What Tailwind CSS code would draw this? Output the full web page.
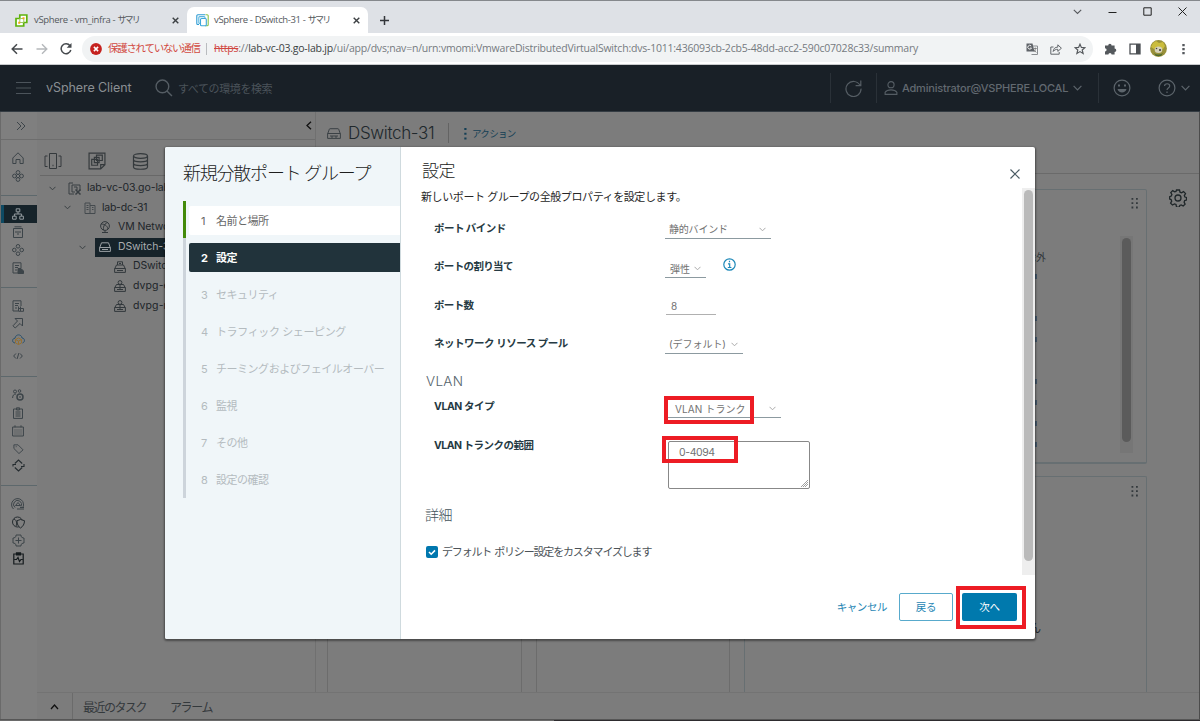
<!DOCTYPE html>
<html lang="ja">
<head>
<meta charset="utf-8">
<title>vSphere - DSwitch-31 - サマリ</title>
<script src="https://cdn.jsdelivr.net/npm/@tailwindcss/browser@4"></script>
</head>
<body class="overflow-hidden">
<div class="relative flex h-[721px] w-[1200px] flex-col overflow-hidden bg-[#7c7c7c] font-['Inter','Noto_Sans_CJK_JP',sans-serif] text-[11px] leading-none whitespace-nowrap text-[#333]">

  <!-- browser tabs -->
  <div class="flex h-[33px] shrink-0 items-end border-t border-[#85888c] bg-[#dee1e6] font-['Open_Sans','Noto_Sans_CJK_JP',sans-serif] text-[9.500px] text-[#55595d]">
    <div class="flex h-[26px] w-[187px] items-center pl-[15px]">
      <svg class="mr-[6px] size-[13px]" viewBox="0 0 13 13" fill="none" stroke="#5fb30b" stroke-width="1.7"><path d="M4.8 1h7v7.500H8.700V12H1V4.500h3.800z" fill="#fff"/><path d="M4.800 4.500v4h4v-4z" stroke="#9ccc62" stroke-width="1"/><path d="M7.500 3.200h2v2h-2zM3.200 7.800h2v2h-2z" fill="#f7a01d" stroke="none"/></svg>
      <span class="w-[138px] tracking-[-0.330px]">vSphere - vm_infra - <span class="text-[9px] tracking-[-1.900px]">サマリ</span></span>
      <svg class="size-[7px]" viewBox="0 0 7 7" stroke="#3c4043" stroke-width="1.400"><path d="M.7.7l5.600 5.600M6.300.7L.7 6.300"/></svg>
    </div>
    <div class="flex h-[26px] w-[181px] items-center rounded-t-[7px] bg-white pl-[9px]">
      <svg class="mr-[5px] size-[13px]" viewBox="0 0 13 13" fill="none" stroke-width="1.100"><path d="M3 10.500H1.800a1 1 0 01-1-1v-7.700a1 1 0 011-1h7.400" stroke="#2d9bd3"/><path d="M9.500.8h1.700a1 1 0 011 1v9a1 1 0 01-1 1H9" stroke="#8bc34a"/><rect x="2.800" y="2.600" width="6.200" height="6.800" rx="1" stroke="#59b6df"/><rect x="4.500" y="4.500" width="5.800" height="7.200" rx="1" stroke="#3da7db" fill="#fff"/></svg>
      <span class="w-[139px] tracking-[-0.350px]">vSphere - DSwitch-31 - <span class="text-[9px] tracking-[-1.700px]">サマリ</span></span>
      <svg class="size-[7px]" viewBox="0 0 7 7" stroke="#3c4043" stroke-width="1.400"><path d="M.7.7l5.600 5.600M6.300.7L.7 6.300"/></svg>
    </div>
    <div class="flex h-[26px] grow items-center pl-[12px]">
      <svg class="size-[9px]" viewBox="0 0 9 9" stroke="#33363a" stroke-width="1.500"><path d="M0 4.500h9M4.500 0v9"/></svg>
    </div>
    <div class="flex h-[32px] items-start gap-[26px] pt-[6px] pr-[13px]">
      <svg class="size-[9px]" viewBox="0 0 9 9" fill="none" stroke="#55585c" stroke-width="1.100"><path d="M.8 2.800l3.700 3.700 3.700-3.700"/></svg>
      <svg class="size-[9px]" viewBox="0 0 9 9" stroke="#222" stroke-width="1"><path d="M.5 5.500h8"/></svg>
      <svg class="size-[9px]" viewBox="0 0 9 9" fill="none" stroke="#222" stroke-width="1"><path d="M.8.8h7.400v7.400H.8z"/></svg>
      <svg class="size-[9px]" viewBox="0 0 9 9" stroke="#222" stroke-width="1"><path d="M.5.5l8 8M8.500.5l-8 8"/></svg>
    </div>
  </div>

  <!-- address bar -->
  <div class="flex h-[32px] shrink-0 items-center border-b border-[#c9cbcd] bg-white pl-[11px] font-['Open_Sans','Noto_Sans_CJK_JP',sans-serif]">
    <svg class="mr-[13px] size-[12px] shrink-0" viewBox="0 0 12 12" fill="none" stroke="#45494d" stroke-width="1.500"><path d="M11.500 6H1.500M6 1.200L1.200 6 6 10.800"/></svg>
    <svg class="mr-[12px] size-[12px] shrink-0" viewBox="0 0 12 12" fill="none" stroke="#b5b8bb" stroke-width="1.400"><path d="M.5 6h10M6 1.200L10.800 6 6 10.800"/></svg>
    <svg class="mr-[10px] size-[12px] shrink-0" viewBox="0 0 12 12" fill="none" stroke="#45494d" stroke-width="1.500"><path d="M10 2.800A4.900 4.900 0 1010.800 7"/><path d="M11.500 0v4.800H6.700z" fill="#45494d" stroke="none"/></svg>
    <div class="flex h-[26px] w-[1011px] shrink-0 items-center rounded-full bg-[#f1f3f4] pl-[8px]">
      <svg class="mr-[6px] size-[12px] shrink-0" viewBox="0 0 12 12"><circle cx="6" cy="6" r="5.900" fill="#c5221f"/><path d="M3.900 3.900l4.200 4.200M8.100 3.900L3.900 8.100" stroke="#fff" stroke-width="1.500"/></svg>
      <span class="w-[92px] shrink-0 text-[10.500px] tracking-[-1.300px] text-[#d14a41]">保護されていない通信</span>
      <span class="mr-[7px] ml-[6px] h-[12px] w-px shrink-0 bg-[#b9bcbf]"></span>
      <span class="w-[812px] shrink-0 text-[10.500px] tracking-[-0.210px] text-[#757a7f]"><span class="text-[#d0473f] line-through">https</span>://<span class="text-[#3b3f43]">lab-vc-03.go-lab.jp</span>/ui/app/dvs;nav=n/urn:vmomi:VmwareDistributedVirtualSwitch:dvs-1011:436093cb-2cb5-48dd-acc2-590c07028c33/summary</span>
      <svg class="mr-[12px] size-[12px] shrink-0" viewBox="0 0 12 12" fill="none"><path d="M.5.500h6l2 8h-8z" fill="#5f6368"/><path d="M7 3h4.500v8.500H5.500" stroke="#8a8d91"/><path d="M5.200 3A1.900 1.900 0 105.500 5H4.200" stroke="#fff" stroke-width=".9"/><path d="M7.800 5.500h3M9.300 4.500v1.500q0 2-1.500 3M8.300 7l2 2.500" stroke="#777" stroke-width=".8"/></svg>
      <svg class="mr-[12px] size-[12px] shrink-0" viewBox="0 0 12 12" fill="none" stroke="#63676b" stroke-width="1"><path d="M3.500 4H.8v7.200h8.400V9"/><path d="M3.200 8.500C3.500 5.500 5 4.200 7.800 4.100V1.800L11.400 5.200 7.800 8.400V6.300C5.700 6.300 4.300 7 3.200 8.500z"/></svg>
      <svg class="size-[12px] shrink-0" viewBox="0 0 12 12" fill="none" stroke="#55595d" stroke-width="1.200"><path d="M6 1.200l1.400 3.200 3.500.3-2.700 2.300.9 3.400L6 8.600l-3.100 1.800.9-3.400L1.100 4.700l3.500-.3z"/></svg>
    </div>
    <div class="ml-[11px] flex shrink-0 items-center">
      <svg class="mr-[12px] size-[13px]" viewBox="0 0 13 13" fill="#55595d"><path d="M1 3.500h3.200a1.700 1.700 0 113.400 0h3v3a1.700 1.700 0 110 3.400v2.600H7.600a1.600 1.600 0 10-3.200 0H1V9.400a1.600 1.600 0 100-3.200z"/></svg>
      <svg class="mr-[9px] size-[12px]" viewBox="0 0 12 12"><path d="M1 1.200h10v9.600H1z" fill="none" stroke="#4b4f53" stroke-width="1.300"/><path d="M7 1h4v10H7z" fill="#4b4f53"/></svg>
      <svg class="mr-[15px] size-[17px]" viewBox="0 0 17 17"><circle cx="8.500" cy="8.500" r="8.400" fill="#99913a"/><path d="M3 3l3-2 3 2 4-1 2 4-2 3H4L1 7z" fill="#cbbd3c"/><ellipse cx="8.500" cy="9.800" rx="3.800" ry="3.200" fill="#d6d2b8"/><circle cx="6.500" cy="8.500" r=".8" fill="#444"/><circle cx="10" cy="10" r="1" fill="#333"/><path d="M4 13q4 3 9 0l-2 3H6z" fill="#4d6a31"/></svg>
      <svg class="h-[12px] w-[3px]" viewBox="0 0 3 12" fill="#55595d"><path d="M.3 1h2.400v2.200H.3zM.3 5h2.400v2.200H.3zM.3 9h2.400v2.200H.3z"/></svg>
    </div>
  </div>

  <!-- product header -->
  <div class="flex h-[47px] shrink-0 items-center border-b border-[#343c43] bg-[#192027] pl-[16px] text-[#626970]">
    <svg class="mr-[15px] h-[12px] w-[15px]" viewBox="0 0 15 12" stroke="#4c545b" stroke-width="1"><path d="M0 .5h15M0 6h15M0 11.500h15"/></svg>
    <span class="w-[109px] pt-px text-[12.500px] tracking-[-0.080px] text-[#8a8f93]">vSphere Client</span>
    <svg class="mr-[5px] size-[18px]" viewBox="0 0 17 17" fill="none" stroke="#555d64" stroke-width="1.300"><circle cx="7" cy="7" r="6"/><path d="M11.300 11.300L16 16"/></svg>
    <span class="grow pt-[2px] text-[11px] tracking-[-0.400px] text-[#4b535a]">すべての環境を検索</span>
    <div class="flex h-[30px] items-center border-l border-[#2a3138] pl-[14px]">
      <svg class="mr-[14px] size-[17px]" viewBox="0 0 17 17" fill="none" stroke="#555d64" stroke-width="1.200"><path d="M15 5.200A7.500 7.500 0 1016 8.600M15.800.5V5.700H10.600"/></svg>
    </div>
    <div class="flex h-[30px] w-[222px] items-center border-l border-[#2a3138] pl-[7px]">
      <svg class="mr-[4px] size-[14px] shrink-0" viewBox="0 0 14 15" fill="none" stroke="#555d64" stroke-width="1.200"><circle cx="7" cy="4" r="3.300"/><path d="M.7 14.300V12C3 8.600 11 8.600 13.300 12v2.300z"/></svg>
      <span class="w-[171px] shrink-0 pt-px text-[11px] font-medium tracking-[-0.200px]">Administrator@VSPHERE.LOCAL</span>
      <svg class="h-[6px] w-[9px]" viewBox="0 0 9 6" fill="none" stroke="#5d656c" stroke-width="1.200"><path d="M.6.8l3.900 4L8.400.8"/></svg>
    </div>
    <div class="flex h-[30px] w-[102px] items-center border-l border-[#2a3138] pl-[14px]">
      <svg class="mr-[27px] size-[18px] shrink-0" viewBox="0 0 18 18" fill="none" stroke="#5d656c" stroke-width="1.200"><circle cx="9" cy="9" r="7.900"/><path d="M4.500 10h9c-.8 4.500-8.200 4.500-9 0z" fill="#5d656c" stroke="none"/><path d="M5 6.500h2M11 6.500h2" stroke-width="2"/></svg>
      <svg class="mr-[5px] size-[18px] shrink-0" viewBox="0 0 18 18" fill="none" stroke="#5d656c" stroke-width="1.200"><circle cx="9" cy="9" r="7.900"/><path d="M6.500 7c.2-3 5.200-3 5.200 0 0 2-2.700 2-2.700 4M9 12.500V14"/></svg>
      <svg class="h-[6px] w-[9px] shrink-0" viewBox="0 0 9 6" fill="none" stroke="#5d656c" stroke-width="1.200"><path d="M.6.8l3.900 4L8.400.8"/></svg>
    </div>
  </div>

  <!-- application body -->
  <div class="flex h-[607px] shrink-0">
    <!-- icon rail -->
    <div class="flex w-[37px] shrink-0 flex-col items-center border-l border-[#6a6a6a] bg-[#7f7f7f] text-[#3c4449]">
      <div class="flex h-[28px] w-full items-center justify-center border-b border-[#6d6d6d] pl-[4px]">
        <svg class="size-[10px]" viewBox="0 0 10 10" fill="none" stroke="currentColor"><path d="M1 1l4 4-4 4M5 1l4 4-4 4"/></svg>
      </div>
      <div class="flex h-[56px] w-full flex-col items-center gap-[6px] border-b border-[#5d686c] pt-[12px] pr-[2px]">
        <svg class="size-[12px]" viewBox="0 0 12 12" fill="none" stroke="currentColor"><path d="M.8 6L6 .8 11.200 6v5.500H8V7.500H4v4H.8z"/></svg>
        <svg class="size-[12px]" viewBox="0 0 12 12" fill="none" stroke="currentColor"><circle cx="6" cy="2.500" r="1.900"/><circle cx="6" cy="9.500" r="1.900"/><circle cx="2.500" cy="6" r="1.900"/><circle cx="9.500" cy="6" r="1.900"/><path d="M6 4l2 2-2 2-2-2z"/></svg>
      </div>
      <div class="flex h-[92px] w-full flex-col border-b border-[#5d686c] pt-[9px]">
        <div class="mb-[3px] flex h-[18px] w-full items-center justify-center border-l-[3px] border-[#0e4a63] bg-[#16232a] pr-[5px] text-[#929a9e]">
          <svg class="size-[12px]" viewBox="0 0 12 12" fill="none" stroke="currentColor"><path d="M4.200.8h3.600v3H4.200zM.6 8.200h3.600v3H.6zM7.800 8.200h3.600v3H7.800zM6 4v2M2.400 8V6h7.200v2"/></svg>
        </div>
        <div class="flex flex-col items-center gap-[6px] pr-[2px]">
          <svg class="size-[12px]" viewBox="0 0 12 12" fill="none" stroke="currentColor"><path d="M1.500 2.500h9v9h-9zM2.500.8h7M4 5v2M6 5v4M8 5v2"/></svg>
          <svg class="size-[12px]" viewBox="0 0 12 12" fill="none" stroke="currentColor"><circle cx="6" cy="2.300" r="1.800"/><circle cx="6" cy="9.700" r="1.800"/><circle cx="2.300" cy="6" r="1.800"/><circle cx="9.700" cy="6" r="1.800"/></svg>
          <svg class="size-[12px]" viewBox="0 0 12 12" fill="none" stroke="currentColor"><path d="M6 11H1V.8h8V6M3 3.500h4M3 5.500h3"/><path d="M6 6.500h3l2.500 2.500v2.500H6z" fill="currentColor"/><path d="M3 8h2"/></svg>
        </div>
      </div>
      <div class="flex h-[89px] w-full flex-col items-center gap-[5px] border-b border-[#5d686c] pt-[12px] pr-[2px]">
        <svg class="size-[12px]" viewBox="0 0 12 12" fill="none" stroke="currentColor"><path d="M6 11H1V.8h8V6M3 3.500h4M3 5.500h3M3 8h2M6.500 6.500v4.800h5V8.500h-5M8.500 11V6.500"/></svg>
        <svg class="size-[12px]" viewBox="0 0 12 12" fill="none" stroke="currentColor"><path d="M3 1.500h7.500V9L8 6.500 3.200 11 1 8.800 5.500 4z"/></svg>
        <svg class="-mt-px size-[13px]" viewBox="0 0 13 12" fill="none"><path d="M3 9.500C-.5 9 0 4.800 3 4.800 3.500.3 9.500.3 10 4.500c3 0 3.300 4.300.5 5" stroke="#2c526d"/><path d="M6.500 4.500L9.500 6v3.500l-3 1.500-3-1.500V6zM3.500 6l3 1.600 3-1.600M6.500 7.600V11" stroke="#947033"/></svg>
        <svg class="size-[10px]" viewBox="0 0 12 12" fill="none" stroke="currentColor" stroke-width="1.200"><path d="M3.500 3L.8 6l2.700 3M8.500 3l2.700 3-2.700 3M7 2.500L5 9.500"/></svg>
      </div>
      <div class="flex h-[109px] w-full flex-col items-center gap-[6px] border-b border-[#5d686c] pt-[12px] pr-[2px]">
        <svg class="size-[12px]" viewBox="0 0 12 12" fill="none" stroke="currentColor"><circle cx="3" cy="2.500" r="1.500"/><circle cx="7.500" cy="2" r="1.300"/><path d="M.6 9c0-3 1.500-4 3.500-4"/><circle cx="8" cy="8" r="3" stroke-width="1.500"/><path d="M8 7v2"/></svg>
        <svg class="size-[12px]" viewBox="0 0 12 12" fill="none" stroke="currentColor"><path d="M1.500 2h9v9.400h-9zM4.500.8h3V3h-3zM3.500 5h5M3.500 7h5M3.500 9h5"/></svg>
        <svg class="size-[12px]" viewBox="0 0 12 12" fill="none" stroke="currentColor"><path d="M.6 2h10.800v9H.6zM3 .3v2M9 .3v2"/><path d="M2.500 5h7M2.500 7h7M2.500 9h7" stroke-dasharray="1 1"/></svg>
        <svg class="size-[11px]" viewBox="0 0 12 12" fill="none" stroke="currentColor"><path d="M1 2v4l5.500 5.500 4.500-4L5.500 2z"/><path d="M3 4h1"/></svg>
        <svg class="-mt-px size-[13px]" viewBox="0 0 13 13" fill="none" stroke="#252c30" stroke-width="1.100"><path d="M2.800 4.500L6.500 1l3.700 3.500M2.800 8.500L6.500 12l3.700-3.500M1 7.500V5.500h3M12 5v2.500H9"/></svg>
      </div>
      <div class="flex w-full flex-col items-center gap-[5px] pt-[11px] pr-[2px]">
        <svg class="size-[14px]" viewBox="0 0 14 14" fill="none" stroke="currentColor"><path d="M2.500 12a6 6 0 119-1M4 10.500a4 4 0 116-1M4.500 8.500h5L7 5.500zM6 12h7M9 10.500h4"/></svg>
        <svg class="size-[13px]" viewBox="0 0 13 13" fill="none" stroke="#252c30"><circle cx="5.500" cy="6" r="5"/><path d="M2 3c3 1 3 5 2 7"/><path d="M8.500 3.500l4 1.200C12.500 8 11 10.500 8.500 12 6 10.500 5 8 5 4.700z" fill="#7f7f7f"/></svg>
        <svg class="size-[13px]" viewBox="0 0 13 13" fill="none" stroke="currentColor"><path d="M4 1h5v1.500L11 4h1v5h-1l-2 1.500V12H4v-1.500L2 9H1V4h1l2-1.500zM6.500 3.500v6M3.500 6.500h6"/></svg>
        <svg class="size-[13px]" viewBox="0 0 13 13" fill="none" stroke="#141a1d" stroke-width="1.200"><path d="M1.800 2h9.400v10H1.800zM4.500.8h4V3h-4zM2.500 7.500h2L6 5.500l1.500 4L9 7.500h1.500"/></svg>
      </div>
    </div>

    <div class="flex grow flex-col">
      <div class="flex h-[580px]">
        <!-- inventory tree -->
        <div class="flex w-[279px] shrink-0 flex-col border-r border-[#707070]">
          <div class="flex h-[28px] items-center justify-end border-b border-[#6d6d6d] pr-[3px]">
            <svg class="h-[9px] w-[6px]" viewBox="0 0 6 9" fill="none" stroke="#111" stroke-width="1.300"><path d="M5 .7L1 4.500l4 3.800"/></svg>
          </div>
          <div class="ml-[3px] flex h-[36px] items-center gap-[26px] border-b border-[#686868] pt-[7px] pl-[4px] text-[#34393c]">
            <svg class="size-[18px]" viewBox="0 0 18 18" fill="none" stroke="currentColor"><path d="M5.500 1.500h7v15h-7zM3.500 4H1v10.500h2.500M14.500 4H17v10.500h-2.500"/><path d="M8.500 13.500h1" stroke-width="1.500"/></svg>
            <svg class="size-[18px]" viewBox="0 0 17 17" fill="none" stroke="currentColor" stroke-width="1.100"><path d="M1 1h15v11l-4 4H1zM16 12h-4v4"/><path d="M8 3h5.500v5H8zM3.500 7H9v5.500H3.500zM6 5h4.500v5H6z"/></svg>
            <svg class="size-[17px]" viewBox="0 0 17 17" fill="none" stroke="currentColor" stroke-width="1.200"><ellipse cx="8.500" cy="3" rx="7" ry="2.300"/><path d="M1.500 3v11c0 3 14 3 14 0V3M1.500 6.600c0 3 14 3 14 0M1.500 10.300c0 3 14 3 14 0"/></svg>
          </div>
          <div class="flex flex-col pt-[2.500px] text-[10.500px] tracking-[-0.100px] text-[#20252a]">
            <div class="flex h-[19.600px] items-center pl-[12px]">
              <svg class="mr-[12px] h-[5px] w-[7px]" viewBox="0 0 7 5" fill="none" stroke="#3a4044"><path d="M.5.8l3 3 3-3"/></svg>
              <svg class="mr-[6px] size-[13px]" viewBox="0 0 13 13" fill="none" stroke="#383e42"><path d="M1 1h4M1 1v11h5M4 3h8v6M4 3v7h3M6 5h3v3"/><path d="M7.500 7.500l5 5M12.500 7.500l-5 5" stroke-width="1.500"/></svg>
              <span>lab-vc-03.go-lab.jp</span>
            </div>
            <div class="flex h-[19.600px] items-center pl-[27px]">
              <svg class="mr-[13px] h-[5px] w-[7px]" viewBox="0 0 7 5" fill="none" stroke="#3a4044"><path d="M.5.8l3 3 3-3"/></svg>
              <svg class="mr-[6px] size-[12px]" viewBox="0 0 12 12" fill="none" stroke="#444a4e"><path d="M1 11.500V1h5v10.500zM6 3.500h5v8H6M2.500 3.500h2M2.500 5.500h2M2.500 7.500h2M8 5.500h1.500M8 7.500h1.500"/></svg>
              <span class="tracking-[-0.250px]">lab-dc-31</span>
            </div>
            <div class="flex h-[19.600px] items-center pl-[62px]">
              <svg class="mr-[7px] size-[12px]" viewBox="0 0 12 12" fill="none" stroke="#33393d"><circle cx="6" cy="5" r="4.400"/><path d="M2 3c3 0 6 1 7 5M9 1.500C6 2 4 5 4.500 9M3 11.500h6M6 9.500v2"/></svg>
              <span>VM Network</span>
            </div>
            <div class="flex h-[19.600px] items-center pl-[42px] text-[#a9adb0]">
              <svg class="mr-[9px] h-[5px] w-[7px]" viewBox="0 0 7 5" fill="none" stroke="#3a4044"><path d="M.5.8l3 3 3-3"/></svg>
              <div class="flex h-[19px] grow items-center bg-[#16232a] pl-[4px]">
                <svg class="mr-[7px] h-[10px] w-[12px]" viewBox="0 0 12 10" fill="none" stroke="#9aa0a4"><path d="M.6 6L2.500.8h7L11.400 6v3.400H.6zM.6 5.500h10.800M3 7.500h6"/></svg>
                <span>DSwitch-31</span>
              </div>
            </div>
            <div class="flex h-[19.600px] items-center pl-[77px]">
              <svg class="mr-[7px] h-[12px] w-[12px]" viewBox="0 0 12 12" fill="none" stroke="#33393d"><path d="M.6 8L2.500 4h7l1.900 4v3.400H.6zM.6 7.500h10.800M3 9.500h6M3.500 4V.8h5V4M5 2.500h2"/></svg>
              <span>DSwitch-31</span>
            </div>
            <div class="flex h-[19.600px] items-center pl-[77px]">
              <svg class="mr-[7px] h-[12px] w-[12px]" viewBox="0 0 12 12" fill="none" stroke="#33393d"><path d="M.6 8L2.500 4.500h7l1.900 3.500v3.400H.6zM.6 7.500h10.800M3 9.500h6M6 4.500V9"/><circle cx="6" cy="2.500" r="1.900"/></svg>
              <span class="tracking-[0.100px]">dvpg-ext</span>
            </div>
            <div class="flex h-[19.600px] items-center pl-[77px]">
              <svg class="mr-[7px] h-[12px] w-[12px]" viewBox="0 0 12 12" fill="none" stroke="#33393d"><path d="M.6 8L2.500 4.500h7l1.900 3.500v3.400H.6zM.6 7.500h10.800M3 9.500h6M6 4.500V9"/><circle cx="6" cy="2.500" r="1.900"/></svg>
              <span class="tracking-[0.100px]">dvpg-mgmt</span>
            </div>
          </div>
        </div>

        <!-- object summary -->
        <div class="flex grow flex-col">
          <div class="flex h-[62px] items-start border-b border-[#6a6a6a] pt-[11px] pl-[11px]">
            <svg class="mt-[5px] mr-[7px] h-[11px] w-[14px]" viewBox="0 0 14 11" fill="none" stroke="#3b4145"><path d="M.6 6L2.300 1.300q.2-.6.800-.6h7.800q.6 0 .8.600L13.400 6v4.400H.6zM.6 5.500h12.800M3 8h8M5 8v2M9 8v2"/></svg>
            <span class="w-[100px] text-[17px] leading-[20px] font-light tracking-[-0.350px] text-[#20282c]">DSwitch-31</span>
            <span class="mr-[15px] h-[20px] w-px bg-[#636363]"></span>
            <svg class="mt-[5px] mr-[5px] h-[12px] w-[3px]" viewBox="0 0 3 12" fill="#143f55"><path d="M.3 0h2.200v2H.3zM.3 4.700h2.200v2H.3zM.3 9.400h2.200v2H.3z"/></svg>
            <span class="pt-[5px] text-[9.500px] leading-[11px] tracking-[-0.700px] text-[#143f55]">アクション</span>
          </div>
          <div class="flex h-[518px] pl-[11px]">
            <div class="mt-[15px] mr-[14px] w-[195px] border-x border-[#6c6c6c]"></div>
            <div class="mt-[15px] mr-[14px] w-[194px] border-x border-[#6c6c6c]"></div>
            <div class="mt-[15px] flex w-[403px] flex-col">
              <div class="relative flex h-[275px] justify-end rounded-[2px] border border-b-[2px] border-[#676f72]">
                <div class="flex flex-col pt-[60px] pr-[74px] text-[10px]">
                  <span class="h-[24px] leading-[14px] text-[#30363a]">除外</span>
                  <div class="flex flex-col gap-[16px] pl-[9px]">
                    <i class="h-[5px] w-[2px] bg-[#43576a]"></i><i class="mt-[21px] h-[5px] w-[2px] bg-[#43576a]"></i><i class="h-[5px] w-[2px] bg-[#43576a]"></i><i class="mt-[21px] h-[5px] w-[2px] bg-[#43576a]"></i><i class="h-[5px] w-[2px] bg-[#43576a]"></i><i class="h-[5px] w-[2px] bg-[#43576a]"></i><i class="h-[5px] w-[2px] bg-[#43576a]"></i>
                  </div>
                </div>
                <div class="mt-[46px] mr-[13px] h-[217px] w-[13px] shrink-0 bg-[#767676] px-[2px] py-[2px]"><div class="h-[204px] rounded-full bg-[#5b5b5b]"></div></div>
                <svg class="absolute top-[8px] right-[7px] h-[11px] w-[8px]" viewBox="0 0 8 11" fill="#33393c"><path d="M.5 0h1.800v1.800H.5zM5 0h1.800v1.800H5zM.5 4.300h1.800v1.800H.5zM5 4.300h1.800v1.800H5zM.5 8.600h1.800v1.800H.5zM5 8.600h1.800v1.800H5z"/></svg>
              </div>
              <div class="relative mt-[12px] flex grow items-start justify-end rounded-t-[2px] border border-b-0 border-[#676f72]">
                <span class="mt-[146px] mr-[105px] text-[11px] text-[#20252a]">ん</span>
                <svg class="absolute top-[9px] right-[7px] h-[11px] w-[8px]" viewBox="0 0 8 11" fill="#33393c"><path d="M.5 0h1.800v1.800H.5zM5 0h1.800v1.800H5zM.5 4.300h1.800v1.800H.5zM5 4.300h1.800v1.800H5zM.5 8.600h1.800v1.800H.5zM5 8.600h1.800v1.800H5z"/></svg>
              </div>
            </div>
            <svg class="mt-[15px] ml-[22px] size-[18px] shrink-0" viewBox="0 0 18 18" fill="none" stroke="#1f2629" stroke-width="1.300"><circle cx="9" cy="9" r="3"/><path d="M7.500 1h3l.5 2.200 1.500.6 2-1.200 2 2-1.200 2 .6 1.400 1.600.5v2.500l-1.800.6-.6 1.500 1 2-1.900 1.900-2-1.100-1.400.6-.6 1.700H7.600L7 15.500l-1.500-.6-2 1.100-1.900-1.900 1.100-2-.6-1.500L.7 10V7.600L2.300 7l.6-1.500-1.100-2 1.900-1.900 2 1.200L7 2.500z"/></svg>
          </div>
        </div>
      </div>
      <!-- task bar -->
      <div class="flex h-[27px] items-center border-t border-[#737373] text-[12px] text-[#34393c]">
        <div class="flex h-full w-[36px] items-center justify-center border-r border-[#6b6b6b] pt-px"><svg class="h-[6px] w-[9px]" viewBox="0 0 9 6" fill="none" stroke="#111" stroke-width="1.300"><path d="M1 5l3.500-4L8 5"/></svg></div>
        <span class="w-[89px] pt-[3px] pl-[10px] tracking-[-1.500px]">最近のタスク</span>
        <span class="pt-[3px] pl-[8px] tracking-[-1.400px]">アラーム</span>
      </div>
    </div>
    <div class="w-px bg-[#4c4c4c]"></div>
  </div>
  <div class="flex h-[2px] shrink-0 border-t border-[#565656] bg-[#6a6a6a]"><div class="ml-[554px] grow bg-[#2d2b2e]"></div></div>

  <!-- wizard dialog -->
  <div class="absolute top-[147px] left-[165px] flex h-[492px] w-[870px] overflow-hidden rounded-[2px] bg-white shadow-[0_1px_2px_1px_rgba(0,0,0,0.4)]">
    <div class="flex w-[236px] shrink-0 flex-col border-r border-[#cfdade] bg-[#f0f6f9] pl-[18px]">
      <h1 class="h-[54px] pt-[17px] text-[18px] leading-[20px] font-light tracking-[-1.220px] text-[#1e1e1e]">新規分散ポート グループ</h1>
      <div class="flex h-[297px]">
        <div class="mr-[3px] w-[3px] bg-[#cdd4db]"><div class="h-[37px] bg-[#438a0a]"></div></div>
        <div class="flex grow flex-col gap-[8px] pt-[5px] text-[11px] text-[#b4bbbf]">
          <div class="flex h-[29px] items-center rounded-l-[2px] bg-white pt-px pl-[12px] text-[#666]"><span class="w-[15px]">1</span><span class="tracking-[-0.500px]">名前と場所</span></div>
          <div class="flex h-[29px] items-center rounded-l-[2px] bg-[#21333b] pt-px pl-[12px] font-bold text-white"><span class="w-[15px]">2</span><span class="tracking-[-0.500px]">設定</span></div>
          <div class="flex h-[29px] items-center pt-px pl-[12px]"><span class="w-[15px]">3</span><span class="tracking-[-0.500px]">セキュリティ</span></div>
          <div class="flex h-[29px] items-center pt-px pl-[12px]"><span class="w-[15px]">4</span><span class="tracking-[-0.380px]">トラフィック シェーピング</span></div>
          <div class="flex h-[29px] items-center pt-px pl-[12px]"><span class="w-[15px]">5</span><span class="tracking-[-0.470px]">チーミングおよびフェイルオーバー</span></div>
          <div class="flex h-[29px] items-center pt-px pl-[12px]"><span class="w-[15px]">6</span><span class="tracking-[-0.500px]">監視</span></div>
          <div class="flex h-[29px] items-center pt-px pl-[12px]"><span class="w-[15px]">7</span><span class="tracking-[-0.500px]">その他</span></div>
          <div class="flex h-[29px] items-center pt-px pl-[12px]"><span class="w-[15px]">8</span><span class="tracking-[-0.500px]">設定の確認</span></div>
        </div>
      </div>
    </div>

    <div class="flex grow flex-col">
      <div class="flex h-[41px] items-start justify-between pt-[14px] pr-[15px] pl-[21px]">
        <h2 class="text-[17px] leading-[20px] font-light tracking-[-0.400px] text-[#222]">設定</h2>
        <svg class="mt-[8px] size-[10px]" viewBox="0 0 10 10" stroke="#4c5d65" stroke-width="1.200"><path d="M.5.5l9 9M9.500.5l-9 9"/></svg>
      </div>
      <div class="flex h-[387px]">
        <div class="flex grow flex-col pl-[20px] text-[10px] text-[#727272]">
          <p class="h-[20px] pt-[2px] text-[11px] leading-[14px] tracking-[-0.400px] text-[#262626]">新しいポート グループの全般プロパティを設定します。</p>
          <div class="flex h-[38px] items-start pt-[12px] pl-[13px]">
            <label class="w-[231px] pt-[2px] text-[10.500px] leading-[14px] font-bold tracking-[-0.550px] text-[#263a43]">ポート バインド</label>
            <div class="flex h-[19px] w-[106px] items-center justify-between border-b border-[#8c9aa0] pr-[5px] pl-[4px]"><span class="tracking-[-0.200px]">静的バインド</span><svg class="h-[5px] w-[7px]" viewBox="0 0 7 5" fill="none" stroke="#aaa"><path d="M.5.8l3 3 3-3"/></svg></div>
          </div>
          <div class="flex h-[39px] items-start pt-[13px] pl-[13px]">
            <label class="w-[231px] pt-px text-[10.500px] leading-[14px] font-bold tracking-[-0.650px] text-[#263a43]">ポートの割り当て</label>
            <div class="mt-[1px] flex h-[18px] w-[41px] items-center justify-between border-b border-[#8c9aa0] pr-[5px] pl-[5px]"><span>弾性</span><svg class="h-[5px] w-[7px]" viewBox="0 0 7 5" fill="none" stroke="#aaa"><path d="M.5.8l3 3 3-3"/></svg></div>
            <svg class="-mt-px ml-[17px] size-[13px]" viewBox="0 0 13 13" fill="none" stroke="#1d88b8" stroke-width="1.200"><circle cx="6.500" cy="6.500" r="5.700"/><path d="M6.500 2.800v1.400M5 5.800h1.700v3.700M4.800 9.500h3.600"/></svg>
          </div>
          <div class="flex h-[38px] items-start pt-[13px] pl-[13px]">
            <label class="w-[232px] pt-px text-[10.500px] leading-[14px] font-bold tracking-[-0.650px] text-[#263a43]">ポート数</label>
            <div class="flex h-[17px] w-[50px] items-center border-b border-[#b0b0b0] pl-[5px]">8</div>
          </div>
          <div class="flex h-[41px] items-start pt-[12px] pl-[13px]">
            <label class="w-[231px] pt-[2px] text-[10.500px] leading-[14px] font-bold tracking-[-0.480px] text-[#263a43]">ネットワーク リソース プール</label>
            <div class="flex h-[19px] w-[78px] items-center justify-between border-b border-[#8c9aa0] pr-[5px] pl-[4px]"><span class="tracking-[-0.050px]">(デフォルト)</span><svg class="h-[5px] w-[7px]" viewBox="0 0 7 5" fill="none" stroke="#aaa"><path d="M.5.8l3 3 3-3"/></svg></div>
          </div>
          <h3 class="h-[23px] pt-[9px] pl-[5px] text-[13.500px] leading-[16px] font-light tracking-[0.300px] text-[#53626a]">VLAN</h3>
          <div class="flex h-[40px] items-start pt-[12px] pl-[13px]">
            <label class="w-[231px] pt-px text-[10.500px] leading-[14px] font-bold tracking-[-0.420px] text-[#263a43]">VLAN タイプ</label>
            <div class="relative flex h-[19px] w-[116px] items-center justify-between border-b border-[#8c9aa0] pr-[5px] pl-[10px]"><span class="pt-px tracking-[0.100px]">VLAN トランク</span><svg class="h-[5px] w-[7px]" viewBox="0 0 7 5" fill="none" stroke="#aaa"><path d="M.5.8l3 3 3-3"/></svg>
              <div class="absolute -top-[3px] -left-[1px] h-[28px] w-[90px] border-4 border-[#ed1c24]"></div></div>
          </div>
          <div class="flex h-[68px] items-start pt-[11px] pl-[13px]">
            <label class="w-[234px] pt-px text-[10.500px] leading-[14px] font-bold tracking-[-0.500px] text-[#263a43]">VLAN トランクの範囲</label>
            <div class="relative mt-[3px] flex h-[48px] w-[142px] items-start rounded-[2px] border border-[#888] pt-[6px] pl-[10px] text-[10.500px] tracking-[-0.400px]">0-4094
              <svg class="absolute right-px bottom-px size-[8px]" viewBox="0 0 8 8" stroke="#888" stroke-width=".8"><path d="M1 8l7-7M5 8l3-3M3 8l5-5"/></svg>
              <div class="absolute -top-[6px] -left-[7px] h-[27px] w-[76px] border-4 border-[#ed1c24]"></div>
            </div>
          </div>
          <h3 class="h-[36px] pt-[11px] pl-[4px] text-[14px] leading-[18px] font-light tracking-[-0.500px] text-[#43525a]">詳細</h3>
          <div class="flex h-[36px] items-center gap-[4px] pt-[5px] pl-[5px] text-[11px] tracking-[-1.160px] text-[#4c5358]">
            <svg class="size-[12px]" viewBox="0 0 12 12"><rect width="12" height="12" rx="2" fill="#0077ae"/><path d="M3 6l2.200 2.200L9 4.400" fill="none" stroke="#fff" stroke-width="1.600"/></svg>
            <span class="pt-px">デフォルト <span class="pl-[1px]">ポリシー設定をカスタマイズします</span></span>
          </div>
        </div>
        <div class="w-[13px] shrink-0 bg-[#eee] px-[2px] pt-[2px]"><div class="h-[371px] rounded-full bg-[#bababa]"></div></div>
      </div>
      <div class="flex grow items-start justify-end pt-[18px] pr-[18px] text-[10.500px] text-[#1e85b4]">
        <span class="mr-[12px] pt-px leading-[28px] tracking-[-0.450px]">キャンセル</span>
        <button class="mr-[9px] h-[28px] w-[54px] rounded-[2px] border border-[#58aacc] pt-[2px] tracking-[-0.300px]">戻る</button>
        <div class="relative"><button class="h-[28px] w-[55px] rounded-[2px] bg-[#0079ad] pt-[2px] tracking-[-0.300px] text-white">次へ</button>
          <div class="absolute -top-[7px] -left-[6px] h-[43px] w-[70px] border-4 border-[#ed1c24]"></div></div>
      </div>
    </div>
  </div>
</div>
</body>
</html>
